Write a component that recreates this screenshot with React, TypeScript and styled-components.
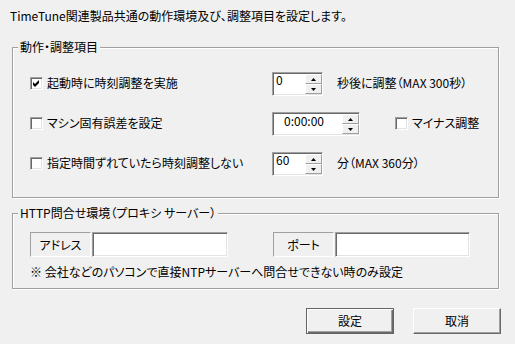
import React from "react";
import styled, { createGlobalStyle } from "styled-components";

const GlobalStyle = createGlobalStyle`
  html, body { margin: 0; padding: 0; background: #f0f0f0; }
  body {
    font-family: "Noto Sans CJK JP", "Noto Sans", sans-serif;
    font-size: 12px;
    color: #000;
    font-feature-settings: "palt";
  }
  * { box-sizing: border-box; }
`;

const Window = styled.div`
  width: 515px;
  height: 344px;
  padding-top: 9px;
  display: flex;
  flex-direction: column;
  overflow: hidden;
  background: #f0f0f0;
`;

const Title = styled.div`
  margin-left: 10px;
  height: 14px;
  line-height: 14px;
  white-space: nowrap;
`;

const Group = styled.section<{ $top: number; $height: number }>`
  position: relative;
  margin: ${(p) => p.$top}px 16px 0 12px;
  height: ${(p) => p.$height}px;
  border: 1px solid #a0a0a0;
  box-shadow: inset 1px 1px 0 #fff, 1px 1px 0 #fff;
  display: flex;
  flex-direction: column;
  padding: ${(p) => (p.$height > 100 ? 24 : 18)}px 0 0 17px;
  gap: 16px;
`;

const Legend = styled.div`
  position: absolute;
  left: 5px;
  top: -8px;
  padding: 0 2px;
  line-height: 14px;
  background: #f0f0f0;
  white-space: nowrap;
`;

const Row = styled.div<{ $height?: number }>`
  display: flex;
  align-items: center;
  height: ${(p) => p.$height ?? 24}px;
`;

const Option = styled.label<{ $width?: number; $gap?: number }>`
  display: flex;
  align-items: center;
  gap: 4px;
  flex: none;
  width: ${(p) => (p.$width ? `${p.$width}px` : "auto")};
  margin-left: ${(p) => p.$gap ?? 0}px;
  margin-bottom: 2px;
  line-height: 14px;
  white-space: nowrap;
`;

const CheckBox = styled.span`
  width: 13px;
  height: 13px;
  flex: none;
  background: #fff;
  border: 1px solid;
  border-color: #a0a0a0 #fff #fff #a0a0a0;
  box-shadow: inset 1px 1px 0 #696969, inset -1px -1px 0 #e3e3e3;
  position: relative;
  svg {
    position: absolute;
    left: -1px;
    top: -1px;
  }
`;

const Check = ({ checked }: { checked?: boolean }) => (
  <CheckBox>
    {checked && (
      <svg width="13" height="13" viewBox="0 0 13 13">
        <polygon points="3,5 5,7 9,3 9,6 5,10 3,8" fill="#000" />
      </svg>
    )}
  </CheckBox>
);

const SpinBox = styled.div<{ $width: number }>`
  width: ${(p) => p.$width}px;
  height: 24px;
  flex: none;
  display: flex;
  background: #fff;
  border: 1px solid;
  border-color: #a0a0a0 #fff #fff #a0a0a0;
  box-shadow: inset 1px 1px 0 #696969, inset -1px -1px 0 #e3e3e3;
  padding: 1px 0 1px 1px;
`;

const SpinValue = styled.span<{ $indent: number; $top: number }>`
  flex: 1;
  padding: ${(p) => p.$top}px 0 0 ${(p) => p.$indent}px;
  line-height: 12px;
  white-space: nowrap;
`;

const SpinButtons = styled.div`
  width: 17px;
  flex: none;
  display: flex;
  flex-direction: column;
`;

const SpinButton = styled.div`
  flex: 1;
  display: flex;
  align-items: center;
  justify-content: center;
  background: #f0f0f0;
  border: 1px solid;
  border-color: #fff #a0a0a0 #a0a0a0 #fff;
`;

const Arrow = ({ down }: { down?: boolean }) => (
  <svg width="5" height="3" viewBox="0 0 5 3">
    <polygon points={down ? "0,0 5,0 2.5,3" : "0,3 5,3 2.5,0"} fill="#000" />
  </svg>
);

const Spinner = ({
  value,
  width,
  indent = 2,
  top = 0,
}: {
  value: string;
  width: number;
  indent?: number;
  top?: number;
}) => (
  <SpinBox $width={width}>
    <SpinValue $indent={indent} $top={top}>
      {value}
    </SpinValue>
    <SpinButtons>
      <SpinButton>
        <Arrow />
      </SpinButton>
      <SpinButton>
        <Arrow down />
      </SpinButton>
    </SpinButtons>
  </SpinBox>
);

const Trail = styled.span<{ $gap: number }>`
  margin-left: ${(p) => p.$gap}px;
  margin-bottom: 2px;
  line-height: 14px;
  white-space: nowrap;
`;

const FieldLabel = styled.div<{ $gap?: number }>`
  width: 61px;
  height: 25px;
  flex: none;
  margin-left: ${(p) => p.$gap ?? 0}px;
  display: flex;
  align-items: center;
  justify-content: center;
  border: 1px solid;
  border-color: #a0a0a0 #fff #fff #a0a0a0;
  line-height: 14px;
`;

const TextBox = styled.div<{ $width: number }>`
  width: ${(p) => p.$width}px;
  height: 25px;
  flex: none;
  margin-left: 1px;
  background: #fff;
  border: 1px solid;
  border-color: #a0a0a0 #fff #fff #a0a0a0;
  box-shadow: inset 1px 1px 0 #696969, inset -1px -1px 0 #e3e3e3;
`;

const Note = styled.div`
  margin-top: -8px;
  line-height: 14px;
  white-space: nowrap;
`;

const ButtonBar = styled.div`
  display: flex;
  justify-content: flex-end;
  gap: 19px;
  margin-top: 19px;
  padding-right: 14px;
`;

const Button = styled.button<{ $default?: boolean }>`
  width: 88px;
  height: 26px;
  padding: 0;
  font: inherit;
  color: #000;
  background: #f0f0f0;
  border: 1px solid;
  border-color: ${(p) =>
    p.$default ? "#646464" : "#fff #696969 #696969 #fff"};
  box-shadow: ${(p) =>
    p.$default
      ? "inset 1px 1px 0 #fff, inset -1px -1px 0 #696969, inset -2px -2px 0 #a0a0a0"
      : "inset -1px -1px 0 #a0a0a0"};
  line-height: 14px;
`;

export default function App() {
  return (
    <>
      <GlobalStyle />
      <Window>
        <Title>TimeTune関連製品共通の動作環境及び、調整項目を設定します。</Title>

        <Group $top={24} $height={151}>
          <Legend>動作・調整項目</Legend>
          <Row>
            <Option $width={242}>
              <Check checked />
              起動時に時刻調整を実施
            </Option>
            <Spinner value="0" width={51} />
            <Trail $gap={14}>秒後に調整（MAX 300秒）</Trail>
          </Row>
          <Row>
            <Option $width={242}>
              <Check />
              マシン固有誤差を設定
            </Option>
            <Spinner value="0:00:00" width={88} indent={10} top={1} />
            <Option $gap={35}>
              <Check />
              マイナス調整
            </Option>
          </Row>
          <Row>
            <Option $width={242}>
              <Check />
              指定時間ずれていたら時刻調整しない
            </Option>
            <Spinner value="60" width={51} />
            <Trail $gap={14}>分（MAX 360分）</Trail>
          </Row>
        </Group>

        <Group $top={15} $height={76}>
          <Legend>HTTP問合せ環境（プロキシ サーバー）</Legend>
          <Row $height={25}>
            <FieldLabel>アドレス</FieldLabel>
            <TextBox $width={136} />
            <FieldLabel $gap={45}>ポート</FieldLabel>
            <TextBox $width={135} />
          </Row>
          <Note>※ 会社などのパソコンで直接NTPサーバーへ問合せできない時のみ設定</Note>
        </Group>

        <ButtonBar>
          <Button $default>設定</Button>
          <Button>取消</Button>
        </ButtonBar>
      </Window>
    </>
  );
}
